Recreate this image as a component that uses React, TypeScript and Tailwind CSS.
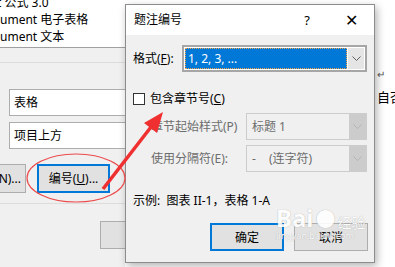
import React from 'react';

function Chevron({ color }: { color: string }) {
  return (
    <svg width="9" height="5" viewBox="0 0 9 5" fill="none">
      <path d="M0.5 0.5 L4.5 4.5 L8.5 0.5" stroke={color} strokeWidth="1" />
    </svg>
  );
}

function Combo({ text, disabled, focused }: { text: React.ReactNode; disabled?: boolean; focused?: boolean }) {
  if (focused) {
    return (
      <div className="flex h-[27px] w-[185px] border-2 border-[#a6a6a6] bg-white p-[1px]">
        <div className="flex flex-1 items-center bg-[#0078d7] pl-[3px] text-white outline-1 outline-dotted outline-offset-[-1px] outline-[#f3a54a]">
          {text}
        </div>
        <div className="ml-[1px] flex w-[16px] items-center justify-center bg-[#e5e5e5]">
          <Chevron color="#606060" />
        </div>
      </div>
    );
  }
  return (
    <div className="flex h-[27px] w-[121px] border border-[#cccccc] bg-[#f0f0f0]">
      <div className="flex flex-1 items-center pl-[5px] text-[#6d6d6d]">{text}</div>
      <div className={`flex w-[17px] items-center justify-center ${disabled ? 'bg-[#cccccc]' : 'bg-[#e5e5e5]'}`}>
        <Chevron color="#b5b5b5" />
      </div>
    </div>
  );
}

export default function App() {
  return (
    <div className="relative h-[267px] w-[395px] overflow-hidden bg-white font-['Noto_Sans','Noto_Sans_CJK_SC',sans-serif] text-[12px] text-black">
      <div className="flex h-full">
        {/* window behind the dialog */}
        <div className="flex h-full w-[125px] flex-col overflow-hidden">
          <div className="flex h-[47px] flex-col bg-white leading-[17px]">
            <div className="ml-[-3px] mt-[-6px] whitespace-nowrap">t 公式 3.0</div>
            <div className="whitespace-nowrap">ument 电子表格</div>
            <div className="whitespace-nowrap">ument 文本</div>
          </div>
          <div className="flex flex-1 flex-col border-t border-[#a0a0a0] bg-[#f0f0f0]">
            <div className="mt-[14px] border-t border-[#dcdcdc]" />
            <div className="ml-[9px] mt-[26px] flex h-[27px] w-[140px] items-center border border-[#adadad] bg-white pl-[4px]">
              表格
            </div>
            <div className="ml-[9px] mt-[6px] flex h-[27px] w-[140px] items-center border border-[#adadad] bg-white pl-[4px]">
              项目上方
            </div>
            <div className="mt-[15px] flex h-[29px] gap-[11px]">
              <div className="ml-[-20px] flex w-[46px] items-center justify-end border border-[#adadad] bg-[#e1e1e1] pr-[4px]">
                N)...
              </div>
              <div className="flex w-[73px] items-center justify-center border-2 border-[#0078d7] bg-[#e1e1e1]">
                编号(<span className="underline">U</span>)...
              </div>
            </div>
            <div className="mt-[10px] border-t border-[#dcdcdc]" />
            <div className="ml-[100px] mt-[17px] h-[28px] w-[40px] border border-[#adadad] bg-[#e1e1e1]" />
          </div>
        </div>
        <div className="w-[250px]" />
        {/* document on the right */}
        <div className="flex flex-1 flex-col overflow-hidden bg-white pl-[2px]">
          <div className="mt-[68px] text-[10px] leading-[12px] text-[#555]">↵</div>
          <div className="mt-[9px] whitespace-nowrap text-[13px] leading-[16px]">自否</div>
        </div>
      </div>

      {/* dialog */}
      <div className="absolute left-[125px] top-[4px] flex h-[259px] w-[250px] flex-col border border-[#8c8c8c] bg-[#f0f0f0] shadow-[2px_3px_8px_rgba(0,0,0,0.3)]">
        <div className="flex h-[30px] items-center bg-white pl-[8px] leading-none">
          <span className="text-[12px]">题注编号</span>
          <span className="ml-auto mr-[35px] text-[13px]">?</span>
          <span className="mr-[16px] text-[16px] font-light">✕</span>
        </div>
        <div className="flex flex-1 flex-col pl-[7px] pr-[6px] leading-[17px]">
          <div className="mt-[10px] flex items-center">
            <span className="w-[49px]">
              格式(<span className="underline">F</span>):
            </span>
            <Combo focused text="1, 2, 3, ..." />
          </div>
          <div className="mt-[21px] flex h-[11px] items-center">
            <div className="h-[12px] w-[12px] border border-[#333] bg-white" />
            <span className="ml-[5px]">
              包含章节号(<span className="underline">C</span>)
            </span>
          </div>
          <div className="mt-[9px] flex items-center text-[#6d6d6d]">
            <span className="ml-[18px] w-[95px]">章节起始样式(P)</span>
            <Combo disabled text="标题 1" />
          </div>
          <div className="mt-[5px] flex items-center text-[#6d6d6d]">
            <span className="ml-[18px] w-[95px]">使用分隔符(E):</span>
            <Combo
              disabled
              text={
                <>
                  -<span className="ml-[13px]">(连字符)</span>
                </>
              }
            />
          </div>
          <div className="mt-[20px] whitespace-nowrap">示例:&nbsp;&nbsp;图表 II-1，表格 1-A</div>
          <div className="mt-[14px] flex justify-end gap-[10px]">
            <div className="flex h-[28px] w-[74px] items-center justify-center border-2 border-[#0078d7] bg-[#e1e1e1]">
              确定
            </div>
            <div className="flex h-[28px] w-[74px] items-center justify-center border border-[#adadad] bg-[#e1e1e1]">
              取消
            </div>
          </div>
        </div>
      </div>

      {/* watermark */}
      <div className="pointer-events-none absolute left-[276px] top-[206px] flex flex-col items-start text-white opacity-90 [text-shadow:0_0_1px_#9a9a9a]">
        <div className="flex items-end leading-none">
          <span className="text-[24px] font-bold">Bai</span>
          <span className="ml-[2px] text-[20px]">●</span>
          <span className="ml-[2px] text-[14px]">经验</span>
        </div>
        <span className="mt-[1px] text-[9px] leading-none">jingyan.baidu.com</span>
      </div>

      {/* annotation */}
      <svg className="pointer-events-none absolute left-0 top-0" width="395" height="267">
        <ellipse cx="76" cy="178" rx="49" ry="24" fill="none" stroke="#ec4a4a" strokeWidth="1.2" />
        <line x1="103" y1="189" x2="151" y2="127" stroke="#f03030" strokeWidth="3.5" />
        <polygon points="163,112 157,133 144,123" fill="#f03030" />
      </svg>
    </div>
  );
}
